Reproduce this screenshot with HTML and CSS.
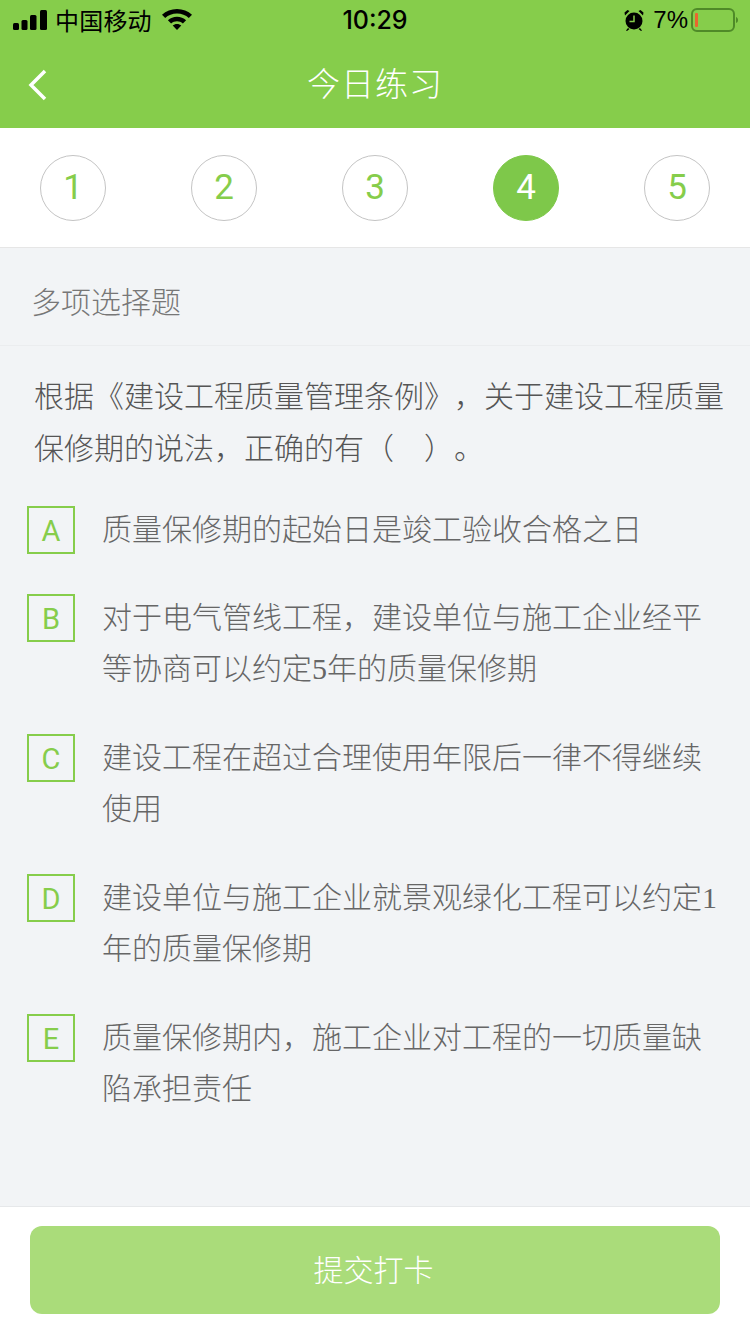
FILE: index.html
```html
<!DOCTYPE html>
<html lang="zh-CN">
<head>
  <meta charset="UTF-8">
  <meta name="viewport" content="width=device-width,initial-scale=1">
  <title>今日练习</title>
  <link rel="stylesheet" href="styles.css">
</head>
<body>
<div class="page">
  <header class="top">
    <div class="status">
      <div class="status-left">
        <svg class="signal" width="34" height="20" viewBox="0 0 34 20"><rect x="0" y="13" width="6" height="7" rx="1.500"/><rect x="8.500" y="10" width="6" height="10" rx="1.500"/><rect x="17" y="5" width="6.500" height="15" rx="1.500"/><rect x="27" y="0" width="7" height="20" rx="1.500"/></svg>
        <span class="carrier">中国移动</span>
        <svg class="wifi" width="30" height="22" viewBox="0 0 30 22"><path d="M15 0C9.200 0 4 2.200 0 5.800l3.200 3.300C6.300 6.300 10.400 4.600 15 4.600s8.700 1.700 11.800 4.500L30 5.800C26 2.200 20.800 0 15 0z"/><path d="M15 7.800c-3.500 0-6.700 1.300-9.100 3.500l3.200 3.200c1.600-1.400 3.700-2.200 5.900-2.200s4.300.8 5.900 2.200l3.200-3.200c-2.400-2.200-5.600-3.500-9.100-3.500z"/><path d="M15 15c-1.700 0-3.200.6-4.300 1.600L15 21l4.300-4.400C18.200 15.600 16.700 15 15 15z"/></svg>
      </div>
      <div class="time">10:29</div>
      <div class="status-right">
        <svg class="alarm" width="20" height="22" viewBox="0 0 20 22"><circle cx="10" cy="12" r="8.500"/><path d="M1 6.500 5.500 2 3.500 1 .5 3.500zM19 6.500 14.500 2l2-1 3 2.500zM4 19l-2 2.500 1 .5 2.500-2zM16 19l2 2.500-1 .5-2.500-2z"/><path d="M10 6.500V12.500H5.500" fill="none" stroke="#86cd4b" stroke-width="1.500"/></svg>
        <span class="pct">7%</span>
        <svg class="battery" width="47" height="24" viewBox="0 0 47 24"><rect x="1" y="1" width="42" height="22" rx="5" fill="none" stroke="#4f8a28" stroke-width="2"/><rect x="4" y="5" width="3" height="14" rx="1" fill="#e8662f"/><path d="M45 9c1.300.5 2 1.500 2 3s-.7 2.500-2 3z" fill="#4f8a28"/></svg>
      </div>
    </div>
    <div class="nav">
      <svg class="back" width="20" height="32" viewBox="0 0 20 32"><path d="M17 2 3 16l14 14" fill="none" stroke="#fff" stroke-width="3.500"/></svg>
      <h1>今日练习</h1>
    </div>
  </header>

  <div class="steps">
    <div class="step">1</div>
    <div class="step">2</div>
    <div class="step">3</div>
    <div class="step current">4</div>
    <div class="step">5</div>
  </div>

  <main class="body">
    <div class="type">多项选择题</div>
    <p class="question">根据《建设工程质量管理条例》，关于建设工程质量保修期的说法，正确的有（　）。</p>
    <ul class="options">
      <li class="option"><span class="letter">A</span><span class="text">质量保修期的起始日是竣工验收合格之日</span></li>
      <li class="option"><span class="letter">B</span><span class="text">对于电气管线工程，建设单位与施工企业经平等协商可以约定<span class="num">5</span>年的质量保修期</span></li>
      <li class="option"><span class="letter">C</span><span class="text">建设工程在超过合理使用年限后一律不得继续使用</span></li>
      <li class="option"><span class="letter">D</span><span class="text">建设单位与施工企业就景观绿化工程可以约定<span class="num">1</span>年的质量保修期</span></li>
      <li class="option"><span class="letter">E</span><span class="text">质量保修期内，施工企业对工程的一切质量缺陷承担责任</span></li>
    </ul>
  </main>

  <footer class="bottom">
    <button class="submit">提交打卡</button>
  </footer>
</div>
</body>
</html>
```

FILE: styles.css
```css
* { box-sizing: border-box; margin: 0; padding: 0 }
html, body { height: 100% }
body {
  font-family: "Noto Sans CJK SC", "Liberation Sans", sans-serif;
  background: #f2f4f6;
  text-spacing-trim: space-all;
}
.page {
  height: 1334px;
  display: flex;
  flex-direction: column;
}

/* green header */
.top { height: 128px; background: #86cd4b }
.status {
  height: 40px;
  padding: 0 12px 0 13px;
  display: flex;
  align-items: center;
  justify-content: space-between;
  position: relative;
  color: #000;
}
.status svg { display: block }
.status-left { display: flex; align-items: center }
.carrier { font-size: 24px; line-height: 40px; margin-left: 8px; letter-spacing: .2px }
.wifi { margin-left: 10px }
.time {
  position: absolute;
  left: 0;
  right: 0;
  text-align: center;
  font: 500 25px/40px "Inter", "Liberation Sans", sans-serif;
}
.status-right { display: flex; align-items: center }
.pct { font: 24px/40px "Liberation Sans", sans-serif; margin: 0 3px 0 9px }
.nav {
  height: 88px;
  padding-bottom: 4px;
  display: flex;
  align-items: center;
  justify-content: center;
  position: relative;
}
.back { position: absolute; left: 28px; top: 29px }
.nav h1 { font-size: 33px; font-weight: 300; color: #fff; letter-spacing: 1px }

/* question numbers */
.steps {
  height: 120px;
  padding: 0 40px;
  background: #fff;
  border-bottom: 1px solid #e6e6e6;
  display: flex;
  align-items: center;
  justify-content: space-between;
}
.step {
  width: 66px;
  height: 66px;
  border: 1px solid #c4c4c4;
  border-radius: 50%;
  display: flex;
  align-items: center;
  justify-content: center;
  font: 35px "Roboto", "Liberation Sans", sans-serif;
  color: #86cd4b;
}
.step.current { background: #7ec84a; border-color: #7ec84a; color: #fff }

/* question */
.body { flex: 1 }
.type {
  height: 98px;
  padding-left: 31px;
  line-height: 104px;
  font-size: 30px;
  font-weight: 300;
  color: #777;
  border-bottom: 1px solid #ebedef;
}
.question {
  padding: 22px 20px 0 34px;
  font-size: 30px;
  line-height: 52px;
  color: #555;
  font-weight: 300;
}
.options { list-style: none; margin-top: 30px; padding: 0 30px 0 27px }
.option { display: flex; align-items: flex-start; margin-bottom: 38px }
.option:first-child { margin-bottom: 36px }
.letter {
  flex: none;
  width: 48px;
  height: 48px;
  margin-top: 4px;
  padding-top: 1px;
  border: 2px solid #86cd4b;
  display: flex;
  align-items: center;
  justify-content: center;
  font: 29px "Roboto", "Liberation Sans", sans-serif;
  color: #86cd4b;
}
.text {
  margin-left: 27px;
  font-size: 30px;
  line-height: 51px;
  font-weight: 300;
  color: #666;
}
.num { font-family: "Liberation Serif", serif; line-height: 1 }

/* submit */
.bottom {
  height: 128px;
  padding: 19px 30px 0;
  background: #fff;
  border-top: 1px solid #e6e8ea;
}
.submit {
  display: block;
  width: 100%;
  height: 88px;
  padding: 0 3px 4px 0;
  border: 0;
  border-radius: 12px;
  background: #aadc7a;
  color: #fff;
  font-family: inherit;
  font-size: 30px;
  font-weight: 300;
}
```
